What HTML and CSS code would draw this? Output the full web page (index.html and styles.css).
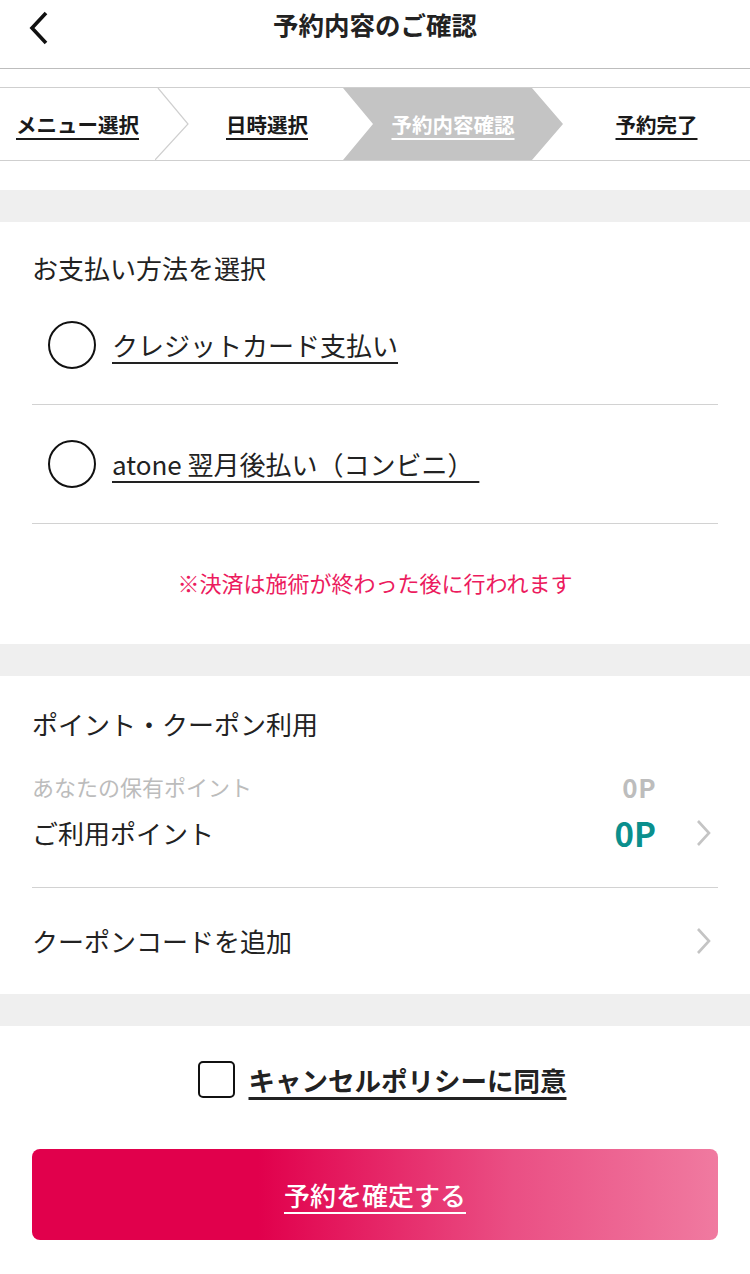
FILE: index.html
```html
<!DOCTYPE html>
<html lang="ja">
<head>
<meta charset="utf-8">
<title>予約内容のご確認</title>
<link rel="stylesheet" href="styles.css">
</head>
<body>
<div class="page">
  <header class="topbar">
    <a class="back" href="#" aria-label="戻る">
      <svg width="30" height="40" viewBox="0 0 30 40"><path d="M22 6 L8 21 L22 36" fill="none" stroke="#111" stroke-width="3.6" stroke-linecap="butt" stroke-linejoin="miter"/></svg>
    </a>
    <h1 class="title">予約内容のご確認</h1>
  </header>

  <nav class="steps">
    <div class="step step-1"><a href="#">メニュー選択</a></div>
    <svg class="step-sep" width="36" height="72" viewBox="0 0 36 72"><path d="M3 0 L33 36 L0 72" fill="none" stroke="#cfcfcf" stroke-width="1.2"/></svg>
    <div class="step step-2"><a href="#">日時選択</a></div>
    <div class="step step-3 is-current"><a href="#">予約内容確認</a></div>
    <div class="step step-4"><a href="#">予約完了</a></div>
  </nav>

  <div class="gap-white"></div>
  <div class="band"></div>

  <section class="panel pay">
    <h2 class="panel-title">お支払い方法を選択</h2>
    <label class="radio-row">
      <span class="radio"></span>
      <span class="radio-label">クレジットカード支払い</span>
    </label>
    <label class="radio-row">
      <span class="radio"></span>
      <span class="radio-label">atone 翌月後払い（コンビニ） </span>
    </label>
    <p class="note">※決済は施術が終わった後に行われます</p>
  </section>

  <div class="band"></div>

  <section class="panel points">
    <h2 class="panel-title">ポイント・クーポン利用</h2>
    <div class="own-row">
      <span class="own-label">あなたの保有ポイント</span>
      <span class="own-value">0P</span>
    </div>
    <a class="use-row" href="#">
      <span class="use-label">ご利用ポイント</span>
      <span class="use-value">0P</span>
      <span class="chev"><svg width="16" height="28" viewBox="0 0 16 28"><path d="M2 2 L13 14 L2 26" fill="none" stroke="#c4c4c4" stroke-width="2.6"/></svg></span>
    </a>
    <a class="coupon-row" href="#">
      <span class="use-label">クーポンコードを追加</span>
      <span class="chev"><svg width="16" height="28" viewBox="0 0 16 28"><path d="M2 2 L13 14 L2 26" fill="none" stroke="#c4c4c4" stroke-width="2.6"/></svg></span>
    </a>
  </section>

  <div class="band"></div>

  <section class="confirm">
    <label class="agree">
      <span class="checkbox"></span>
      <span class="agree-label">キャンセルポリシーに同意</span>
    </label>
    <a class="submit" href="#"><span>予約を確定する</span></a>
  </section>
</div>
</body>
</html>
```

FILE: styles.css
```css
* { box-sizing: border-box; }
html, body { margin: 0; padding: 0; background: #fff; }
body {
  font-family: "Noto Sans CJK JP", "Noto Sans", sans-serif;
  color: #222;
  width: 750px;
}
a { color: inherit; }

.topbar {
  height: 69px;
  border-bottom: 1px solid #bdbdbd;
  display: flex;
  align-items: flex-start;
  justify-content: center;
  position: relative;
}
.back {
  position: absolute;
  left: 24px;
  top: 7px;
  display: block;
  width: 30px;
  height: 40px;
}
.back svg { display: block; }
.title {
  margin: 0;
  font-size: 25.5px;
  font-weight: 700;
  line-height: 48px;
  color: #222;
}

.steps {
  margin-top: 18px;
  height: 74px;
  border-top: 1px solid #cfcfcf;
  border-bottom: 1px solid #cfcfcf;
  display: flex;
  align-items: stretch;
}
.step {
  display: flex;
  align-items: center;
  justify-content: center;
  font-size: 20.5px;
  font-weight: 700;
}
.step a {
  text-decoration: underline;
  text-decoration-thickness: 2px;
  text-underline-offset: 5px;
  color: #1a1a1a;
}
.step-1 { width: 155px; }
.step-sep { flex: none; display: block; width: 36px; height: 72px; }
.step-2 { width: 152px; }
.step-3 {
  width: 220px;
  background: #c4c4c4;
  clip-path: polygon(0 0, 189px 0, 100% 50%, 189px 100%, 0 100%, 30px 50%);
}
.step-3 a { color: #fff; }
.step-4 { width: 187px; }

.gap-white { height: 29px; }
.band { height: 32px; background: #efefef; }

.panel { padding: 0 32px; }
.panel-title {
  margin: 0;
  font-size: 26px;
  font-weight: 400;
  line-height: 36px;
  color: #222;
}
.pay { padding-top: 28px; padding-bottom: 46px; }
.radio-row {
  height: 119px;
  border-bottom: 1px solid #d2d2d2;
  display: flex;
  align-items: center;
  padding-left: 16px;
  gap: 16px;
}
.radio {
  width: 48px;
  height: 48px;
  border: 2px solid #111;
  border-radius: 50%;
  flex: none;
}
.radio-label {
  font-size: 26px;
  line-height: 36px;
  text-decoration: underline;
  text-decoration-thickness: 2px;
  text-underline-offset: 6px;
  color: #222;
  white-space: pre;
}
.note {
  margin: 42px 0 0;
  text-align: center;
  font-size: 22px;
  line-height: 32px;
  color: #ec1b5e;
}

.points { padding-top: 30px; }
.own-row {
  margin-top: 29px;
  display: flex;
  align-items: center;
  height: 30px;
  padding-right: 62px;
}
.own-label { flex: 1; font-size: 22px; color: #bcbcbc; }
.own-value { font-size: 26px; font-weight: 700; color: #bdbdbd; letter-spacing: 0.5px; }
.use-row {
  margin-top: 14px;
  margin-bottom: 36px;
  height: 36px;
  display: flex;
  align-items: center;
  text-decoration: none;
}
.use-label { flex: 1; font-size: 26px; line-height: 36px; color: #222; }
.use-value { font-size: 33px; font-weight: 700; color: #0a8f8d; line-height: 36px; }
.chev { width: 62px; display: flex; justify-content: flex-end; padding-right: 6px; }
.chev svg { display: block; }
.coupon-row {
  height: 107px;
  border-top: 1px solid #d2d2d2;
  display: flex;
  align-items: center;
  text-decoration: none;
}

.confirm { padding: 35px 32px 33px; }
.agree {
  display: flex;
  justify-content: center;
  align-items: center;
  gap: 14px;
  padding-left: 14px;
}
.checkbox {
  width: 37px;
  height: 37px;
  border: 2.5px solid #111;
  border-radius: 5px;
  flex: none;
}
.agree-label {
  font-size: 26.5px;
  font-weight: 700;
  line-height: 36px;
  text-decoration: underline;
  text-decoration-thickness: 3px;
  text-underline-offset: 6px;
  color: #222;
}
.submit {
  margin-top: 51px;
  height: 91px;
  border-radius: 8px;
  background: linear-gradient(to right, #e1004c 0%, #e1004c 33%, #ea4f84 70%, #f07aa0 100%);
  display: flex;
  align-items: center;
  justify-content: center;
  text-decoration: none;
}
.submit span {
  color: #fff;
  font-size: 26px;
  font-weight: 500;
  text-decoration: underline;
  text-decoration-thickness: 2px;
  text-underline-offset: 6px;
}
```
